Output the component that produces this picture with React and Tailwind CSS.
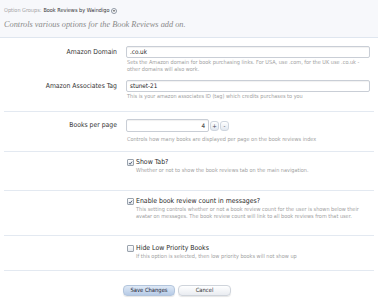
import React from "react";

const Check = ({ checked }) => (
  <span className="inline-flex items-center justify-center w-[7px] h-[7px] border border-[#9aa3ad] bg-gradient-to-b from-white to-[#e4e8ee] rounded-[1px] shrink-0">
    {checked && (
      <svg viewBox="0 0 10 10" className="w-[6px] h-[6px]">
        <path d="M2 5.2 L4.2 7.5 L8.2 2.2" fill="none" stroke="#2d3f5a" strokeWidth="1.6" />
      </svg>
    )}
  </span>
);

const Row = ({ label, children }) => (
  <div className="flex">
    <div className="w-[114px] pr-[1px] text-right text-[6.8px] leading-[12px] text-[#333]">{label}</div>
    <div className="flex-1 pl-[8px] pr-[4px]">{children}</div>
  </div>
);

const Help = ({ children, className = "" }) => (
  <p className={"text-[5.5px] leading-[7px] text-[#a0a0a0] " + className}>{children}</p>
);

const CheckRow = ({ checked, label, children }) => (
  <div className="pl-[123px] pr-[4px]">
    <div className="flex items-center gap-[2px] h-[9px]">
      <Check checked={checked} />
      <span className="text-[6.9px] text-[#2a2a2a]">{label}</span>
    </div>
    <div className="pl-[9px]">{children}</div>
  </div>
);

export default function App() {
  return (
    <div className="w-[378px] h-[300px] overflow-hidden bg-white" style={{ fontFamily: "'DejaVu Sans Condensed', 'DejaVu Sans', sans-serif" }}>
      {/* Header */}
      <div className="h-[38px] bg-[#f7f8fb] border-b border-[#dfe6ef] px-[4px] pt-[7px]">
        <div className="flex items-center gap-[2px] text-[5.5px] leading-[7px] text-[#a3a3a3]">
          <span>Option Groups:</span>
          <span className="text-[#333]">Book Reviews by Waindigo</span>
          <span className="inline-flex items-center justify-center w-[6px] h-[6px] rounded-full border border-[#8d96a3] bg-white">
            <svg viewBox="0 0 6 6" className="w-[4px] h-[4px]">
              <path d="M1 2 L5 2 L3 4.5 Z" fill="#555" />
            </svg>
          </span>
        </div>
        <p className="mt-[6px] text-[8.3px] leading-[10px] italic text-[#8a8a8a]" style={{ fontFamily: "'Liberation Serif', serif" }}>
          Controls various options for the Book Reviews add on.
        </p>
      </div>

      <div className="px-[4px]">
        {/* Amazon */}
        <div className="pt-[8px] pb-[11px] border-b border-[#e3e9f1]">
          <Row label="Amazon Domain">
            <div className="h-[12px] border border-[#c9ced6] rounded-[2px] bg-white px-[3px] text-[6.3px] leading-[10px] text-[#222] shadow-[inset_0_1px_1px_rgba(0,0,0,0.06)]">.co.uk</div>
            <Help className="mt-[1px] pl-[1px]">Sets the Amazon domain for book purchasing links. For USA, use .com, for the UK use .co.uk - other domains will also work.</Help>
          </Row>
          <div className="mt-[7px]">
            <Row label="Amazon Associates Tag">
              <div className="h-[12px] border border-[#c9ced6] rounded-[2px] bg-white px-[3px] text-[6.3px] leading-[10px] text-[#222] shadow-[inset_0_1px_1px_rgba(0,0,0,0.06)]">stunet-21</div>
              <Help className="mt-[1px] pl-[1px]">This is your amazon associates ID (tag) which credits purchases to you</Help>
            </Row>
          </div>
        </div>

        {/* Books per page */}
        <div className="pt-[7px] pb-[8px] border-b border-[#e3e9f1]">
          <Row label="Books per page">
            <div className="flex items-center gap-[1px]">
              <div className="w-[83px] h-[13px] border border-[#c9ced6] rounded-[2px] bg-white px-[3px] text-right text-[6.3px] leading-[11px] text-[#222] shadow-[inset_0_1px_1px_rgba(0,0,0,0.06)]">4</div>
              <span className="w-[9px] h-[10px] rounded-[3px] border border-[#cfd6df] bg-gradient-to-b from-white to-[#e2e8f0] text-[6px] leading-[8px] text-center text-[#445]">+</span>
              <span className="w-[9px] h-[10px] rounded-[3px] border border-[#cfd6df] bg-gradient-to-b from-white to-[#e2e8f0] text-[6px] leading-[8px] text-center text-[#445]">-</span>
            </div>
            <Help className="mt-[4px] pl-[1px]">Controls how many books are displayed per page on the book reviews index</Help>
          </Row>
        </div>

        {/* Show Tab */}
        <div className="pt-[6px] pb-[16px] border-b border-[#e3e9f1]">
          <CheckRow checked label="Show Tab?">
            <Help>Whether or not to show the book reviews tab on the main navigation.</Help>
          </CheckRow>
        </div>

        {/* Enable count */}
        <div className="pt-[6px] pb-[15px] border-b border-[#e3e9f1]">
          <CheckRow checked label="Enable book review count in messages?">
            <Help>This setting controls whether or not a book review count for the user is shown below their avatar on messages. The book review count will link to all book reviews from that user.</Help>
          </CheckRow>
        </div>

        {/* Hide low priority */}
        <div className="pt-[8px] pb-[10px] border-b border-[#e3e9f1]">
          <CheckRow label="Hide Low Priority Books">
            <Help>If this option is selected, then low priority books will not show up</Help>
          </CheckRow>
        </div>

        {/* Buttons */}
        <div className="pl-[119px] pt-[14px] flex gap-[3px]">
          <button className="w-[52px] h-[11px] rounded-[4px] border border-[#b3c5dc] bg-gradient-to-b from-[#dfe9f6] to-[#b5cae6] text-[5.8px] leading-[9px] text-[#223] shadow-[0_1px_1px_rgba(0,0,0,0.1)]">Save Changes</button>
          <button className="w-[53px] h-[11px] rounded-[4px] border border-[#cfd4db] bg-gradient-to-b from-white to-[#e9ecf1] text-[5.8px] leading-[9px] text-[#333] shadow-[0_1px_1px_rgba(0,0,0,0.1)]">Cancel</button>
        </div>
      </div>
    </div>
  );
}
